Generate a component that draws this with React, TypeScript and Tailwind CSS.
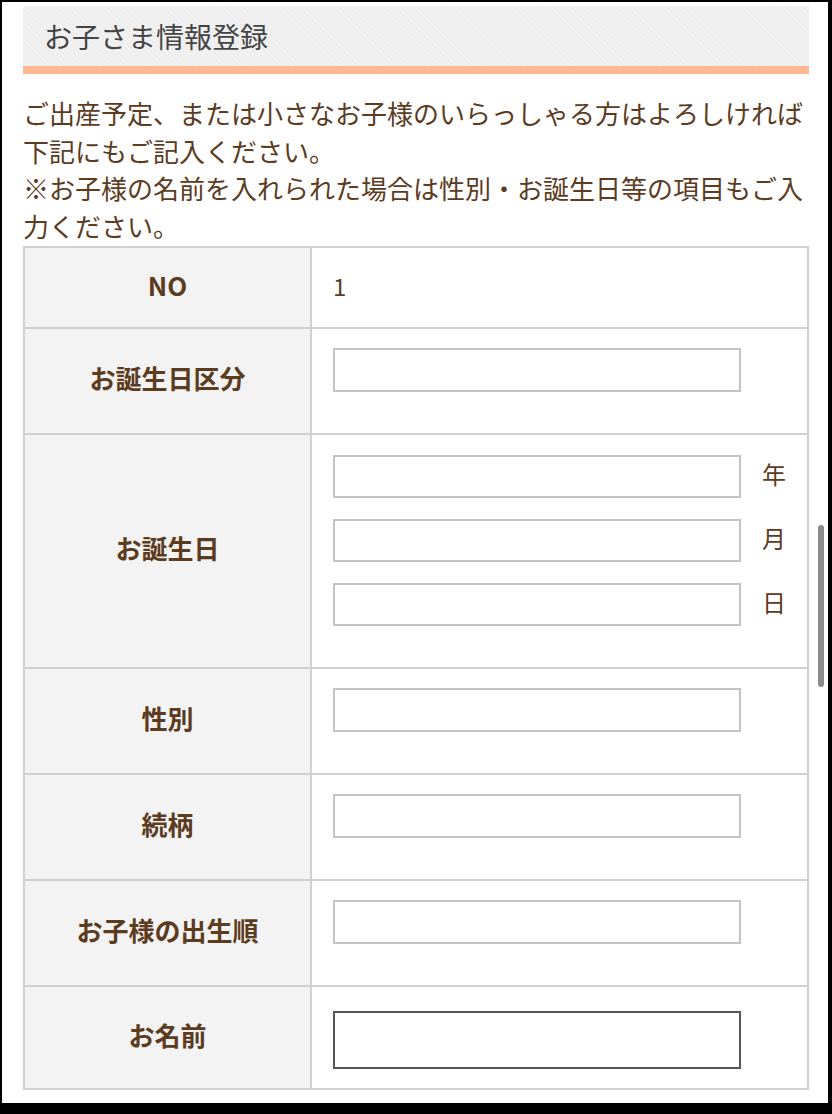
// お子さま情報登録 form section
const font = "font-['Noto_Sans_CJK_JP','Noto_Sans',sans-serif]";

function Row({ label, children, h, cellClass = "" }: { label: string; children: React.ReactNode; h: string; cellClass?: string }) {
  return (
    <div className={`flex ${h} border-t-2 border-[#d0d0d0] first:border-t-0`}>
      <div className="w-[287px] shrink-0 bg-[#f3f3f3] border-r-2 border-[#d0d0d0] flex items-center justify-center text-[26px] font-bold text-[#5c3b1e] pb-[7px]">
        {label}
      </div>
      <div className={`flex-1 pl-[21px] ${cellClass}`}>{children}</div>
    </div>
  );
}

function Box({ className = "h-[44px] border-[#c4c4c4]" }: { className?: string }) {
  return <input type="text" className={`block w-[408px] border-2 bg-white outline-none ${className}`} />;
}

export default function App() {
  return (
    <div className={`w-[832px] h-[1114px] bg-black pt-[2px] pl-[2px] pr-[4px] pb-[11px] ${font}`}>
      <div className="relative h-full bg-white pl-[21px] pr-[19px] pt-[4px] overflow-hidden">
        <h2 className="h-[68px] border-b-8 border-[#ffb992] bg-[repeating-linear-gradient(45deg,#eeeeee_0px,#eeeeee_2px,#f1f1f1_2px,#f1f1f1_4px)] pl-[21px] flex items-center text-[28px] font-normal text-[#444] pb-[1px]">
          お子さま情報登録
        </h2>

        <p className="mt-[20px] text-[26px] leading-[37.5px] text-[#5c3b1e]">
          ご出産予定、または小さなお子様のいらっしゃる方はよろしければ<br />
          下記にもご記入ください。<br />
          ※お子様の名前を入れられた場合は性別・お誕生日等の項目もご入<br />
          力ください。
        </p>

        <div className="mt-[2px] border-2 border-[#d0d0d0]">
          <Row label="NO" h="h-[79px]" cellClass="flex items-center pb-[4px]">
            <span className="text-[24px] text-[#5c3b1e]">1</span>
          </Row>
          <Row label="お誕生日区分" h="h-[106px]" cellClass="pt-[19px]">
            <Box />
          </Row>
          <Row label="お誕生日" h="h-[234px]" cellClass="pt-[20px] flex flex-col gap-[21px]">
            {["年", "月", "日"].map((u) => (
              <div key={u} className="flex items-center">
                <Box className="h-[43px] border-[#c4c4c4]" />
                <span className="ml-[21px] text-[24px] text-[#5c3b1e] pb-[6px]">{u}</span>
              </div>
            ))}
          </Row>
          <Row label="性別" h="h-[106px]" cellClass="pt-[19px]">
            <Box />
          </Row>
          <Row label="続柄" h="h-[106px]" cellClass="pt-[19px]">
            <Box />
          </Row>
          <Row label="お子様の出生順" h="h-[106px]" cellClass="pt-[19px]">
            <Box />
          </Row>
          <Row label="お名前" h="h-[103px]" cellClass="pt-[24px]">
            <Box className="h-[58px] border-[#555]" />
          </Row>
        </div>

        <div className="absolute left-[816px] top-[523px] w-[6px] h-[162px] rounded-full bg-[#8a8a8a]" />
      </div>
    </div>
  );
}
